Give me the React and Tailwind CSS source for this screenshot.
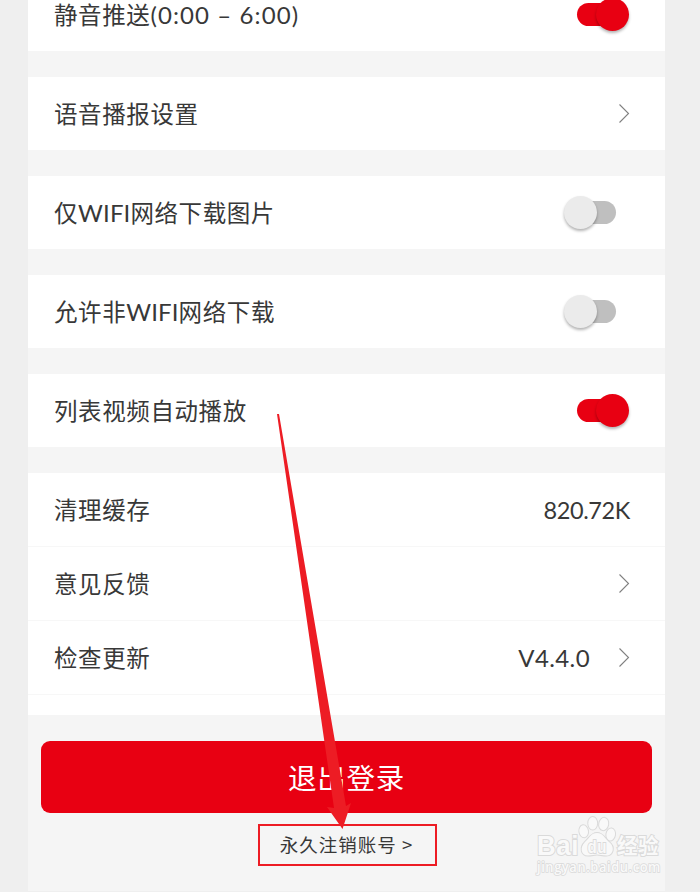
import React from "react";

const Switch = ({ on }) => (
  <div className="relative w-[65px] h-[33px] flex items-center justify-center">
    <div className={`w-[39px] h-[23px] ${on ? "bg-[#e80012] rounded-l-full" : "bg-[#bfbfbf] rounded-r-full"}`} />
    {/* Thumb */}
    <div
      className={`absolute top-0 w-[33px] h-[33px] rounded-full shadow-[0_2px_3px_rgba(0,0,0,0.3)] ${
        on ? "right-0 bg-[#e80012]" : "left-0 bg-[#ebebeb]"
      }`}
    />
  </div>
);

const Chevron = () => (
  <svg className="-mr-px" width="12" height="20" viewBox="0 0 12 20" fill="none" stroke="#808080" strokeWidth="1.1">
    <path d="M1.5 0.5 L10.5 9.500 L1.5 18.500" />
  </svg>
);

const Row = ({ label, children, className = "" }) => (
  <div className={`h-[73px] shrink-0 box-content bg-white pl-[26px] pr-9 flex items-center justify-between ${className}`}>
    <span className="whitespace-nowrap">{label}</span>
    {children}
  </div>
);

const Latin = ({ children, className }) => (
  <span className={`font-['Lato','Noto_Sans_CJK_SC',sans-serif] font-normal ${className}`}>{children}</span>
);

const Watermark = () => (
  <svg
    className="absolute left-[532px] top-[812px]"
    width="134"
    height="68"
    viewBox="0 0 134 68"
    fill="#f9f9f9"
    stroke="#dadada"
    strokeWidth="2"
    paintOrder="stroke"
  >
    <text x="5" y="42.500" textLength="42" lengthAdjust="spacingAndGlyphs" fontFamily="Liberation Sans, sans-serif" fontWeight="700" fontSize="27">
      Bai
    </text>
    {/* Paw */}
    <ellipse cx="51.700" cy="19.300" rx="4.300" ry="6" transform="rotate(-8 51.700 19.300)" />
    <ellipse cx="60.700" cy="11.300" rx="4.400" ry="6.300" />
    <ellipse cx="71.700" cy="12" rx="4.500" ry="6.200" transform="rotate(10 71.700 12)" />
    <ellipse cx="78.700" cy="22.500" rx="4.300" ry="6" transform="rotate(10 78.700 22.500)" />
    <path d="M65 21 C71 21 72.500 26 77 30 C83.500 35 81 43.500 74.500 43.500 C70 43.500 68 42.500 65 42.500 C62 42.500 60 43.500 56 43.500 C49 43.500 47.500 35.500 53 30 C57.500 26 59 21 65 21 Z" />
    <text x="55.500" y="40.500" textLength="19.500" lengthAdjust="spacingAndGlyphs" fontFamily="Liberation Sans, sans-serif" fontWeight="700" fontSize="18" strokeWidth="1.800">
      du
    </text>
    <text x="85" y="41" textLength="42" lengthAdjust="spacingAndGlyphs" fontFamily="Noto Sans CJK SC, sans-serif" fontWeight="700" fontSize="21">
      经验
    </text>
    <text x="5" y="60" textLength="124" lengthAdjust="spacingAndGlyphs" fontFamily="Open Sans, sans-serif" fontWeight="600" fontSize="13.500" strokeWidth="1.600">
      jingyan.baidu.com
    </text>
  </svg>
);

const App = () => {
  return (
    <div className="relative w-[700px] h-[892px] overflow-hidden bg-[#efefef] pl-7 pr-[35px] font-['Noto_Sans_CJK_SC',sans-serif] text-[23.5px] leading-none font-normal tracking-[0.6px] text-[#383838]">
      <div className="h-[891px] bg-[#f5f5f5] flex flex-col">
        {/* Settings groups, the first one is scrolled half out of view */}
        <div className="-mt-[22px] flex flex-col gap-[26px]">
          <Row label={<>静音推送<Latin className="text-[24px] tracking-[1.1px]">(0:00 – 6:00)</Latin></>}>
            <Switch on />
          </Row>
          <Row label="语音播报设置">
            <Chevron />
          </Row>
          <Row label={<>仅<Latin className="text-[24px] tracking-[0.1px]">WIFI</Latin>网络下载图片</>}>
            <Switch />
          </Row>
          <Row label={<>允许非<Latin className="text-[24px] tracking-[0.1px]">WIFI</Latin>网络下载</>}>
            <Switch />
          </Row>
          <Row label="列表视频自动播放">
            <Switch on />
          </Row>
          <div className="bg-white h-[242px]">
            <Row label="清理缓存" className="border-b border-[#f7f7f7]">
              <Latin className="text-[23.5px] tracking-[-0.4px] -mr-px pt-[2px]">820.72K</Latin>
            </Row>
            <Row label="意见反馈" className="border-b border-[#f7f7f7]">
              <Chevron />
            </Row>
            <Row label="检查更新" className="border-b border-[#f7f7f7]">
              <div className="flex items-center gap-7">
                <Latin className="text-[24px] tracking-[0.4px]">V4.4.0</Latin>
                <Chevron />
              </div>
            </Row>
          </div>
        </div>

        {/* Log out */}
        <div className="pt-[26px] px-[13px] flex flex-col items-center">
          <button className="w-full h-[72px] rounded-[9px] bg-[#e80012] text-white text-[28.5px] tracking-[0.8px]">
            退出登录
          </button>
          <div className="mt-[11px] ml-[2px] w-[179px] h-[42px] border-2 border-[#ed1c24] flex items-center justify-center text-[18.5px] tracking-[1px]">
            <span className="whitespace-nowrap -mt-[2px] -ml-[2px]">永久注销账号 &gt;</span>
          </div>
        </div>
      </div>

      {/* Arrow pointing at the account link */}
      <svg className="absolute left-0 top-0" width="700" height="892" fill="#ed1c24">
        <polygon points="277,414 279,414 346,806 351,803 342.500,829 327,807 334,808" />
      </svg>

      <Watermark />
    </div>
  );
};

export default App;
